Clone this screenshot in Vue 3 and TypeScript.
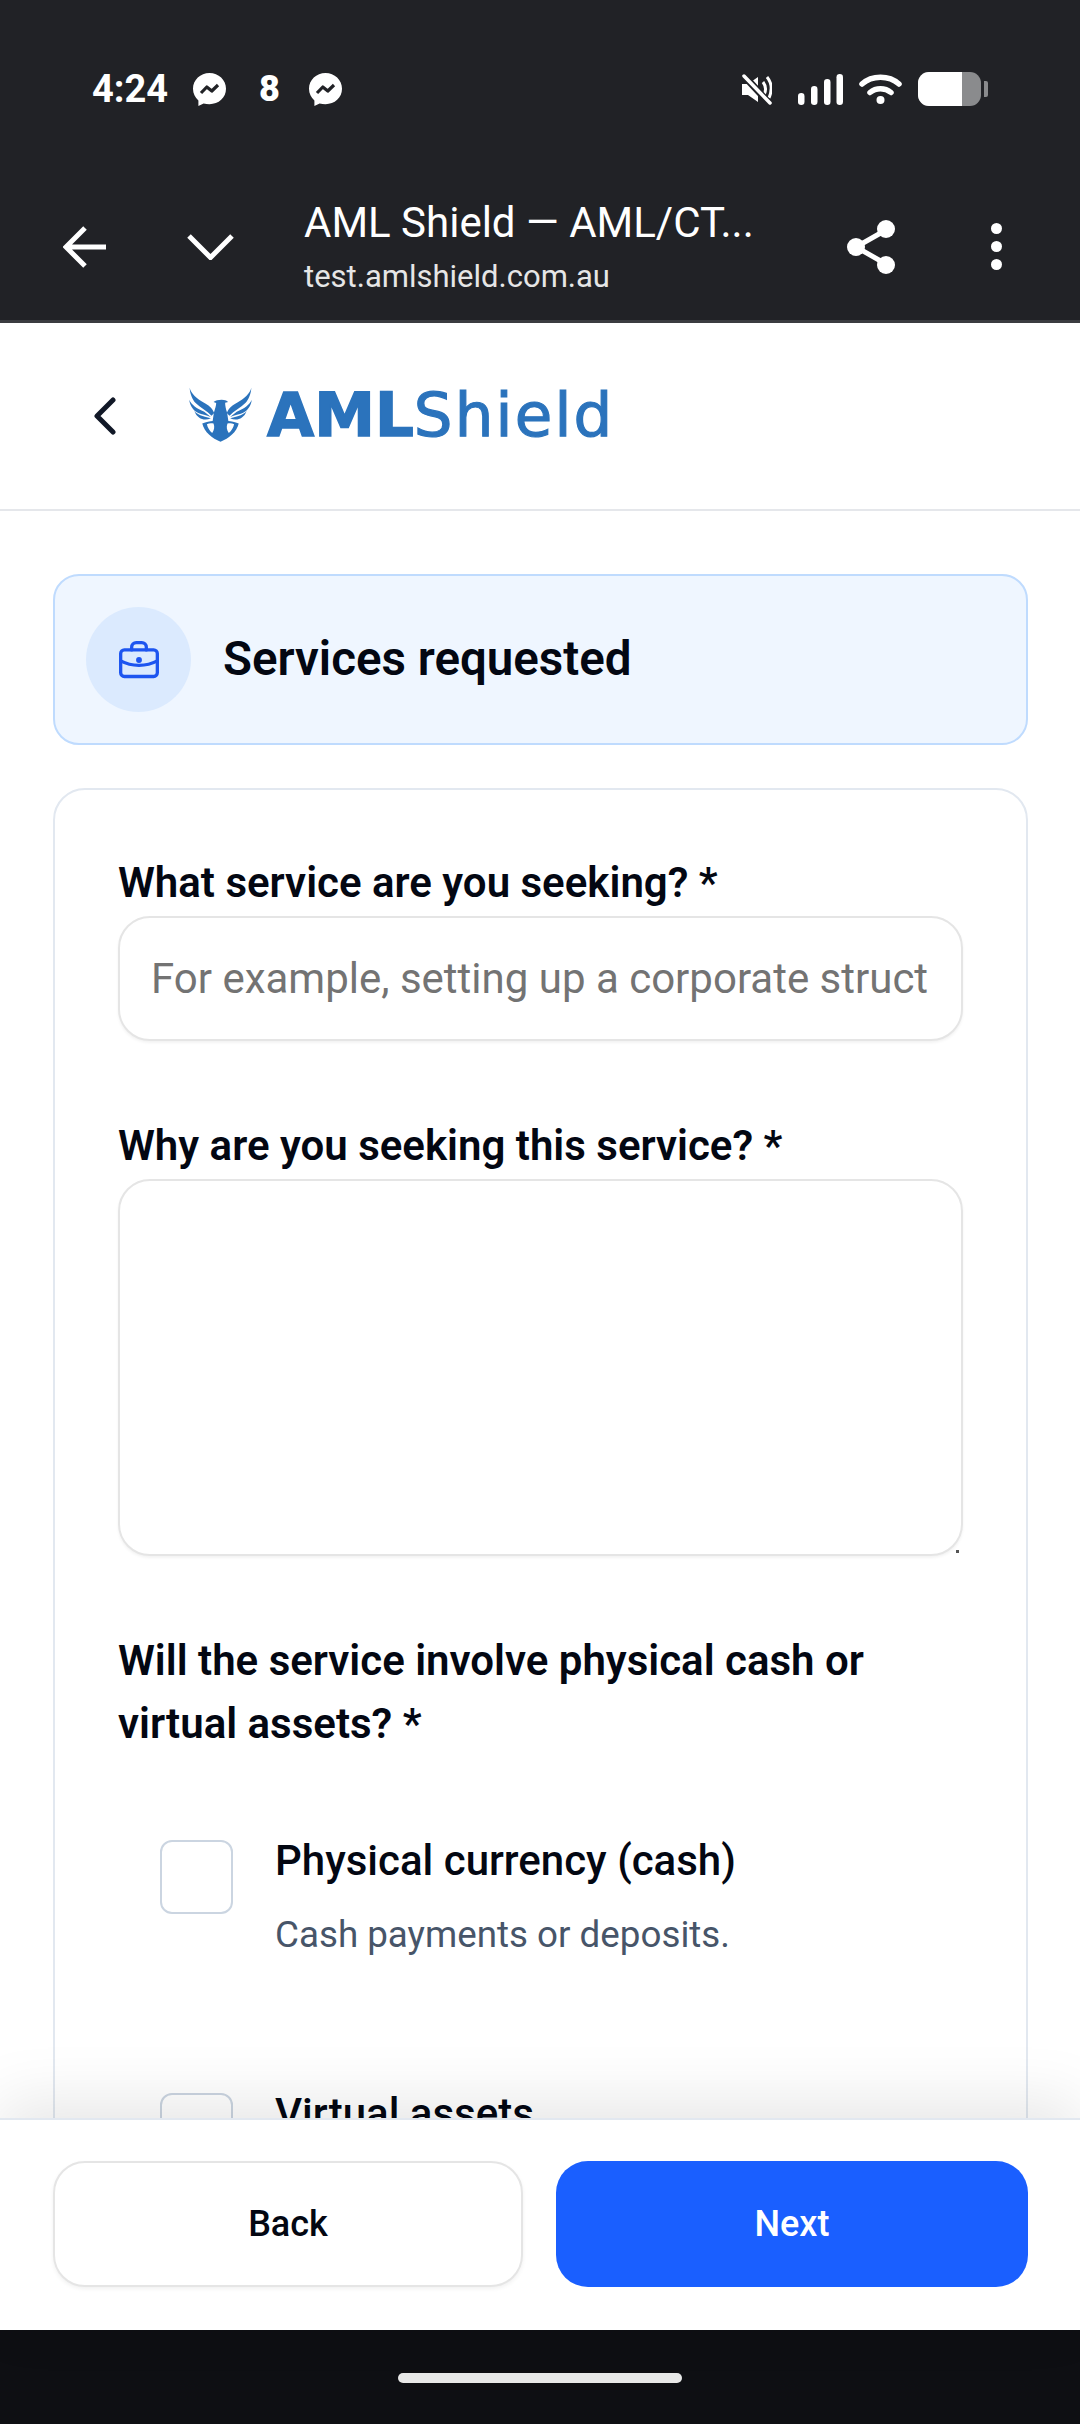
<script setup lang="ts">
interface AssetOption {
  title: string;
  hint?: string;
}

const options: AssetOption[] = [
  { title: "Physical currency (cash)", hint: "Cash payments or deposits." },
  { title: "Virtual assets" },
];
</script>

<template>
  <div class="phone">
    <!-- Android status bar -->
    <div class="status-bar">
      <span class="clock">4:24</span>
      <svg class="bubble" viewBox="0 0 33 33">
        <path fill="#fff" d="M16.500 0C7.400 0 0 6.900 0 15.800c0 4.800 2.100 8.800 5.400 11.600V33l5.200-2.600c1.800.5 3.800.8 5.900.8C25.600 31.200 33 24.700 33 15.800 33 6.900 25.600 0 16.500 0Z" />
        <path fill="none" stroke="#212226" stroke-width="3.200" stroke-linejoin="round" d="m8 20 5.800-6 5 4 6.200-6" />
      </svg>
      <span class="count">8</span>
      <svg class="bubble" viewBox="0 0 33 33">
        <path fill="#fff" d="M16.500 0C7.400 0 0 6.900 0 15.800c0 4.800 2.100 8.800 5.400 11.600V33l5.200-2.600c1.800.5 3.800.8 5.900.8C25.600 31.200 33 24.700 33 15.800 33 6.900 25.600 0 16.500 0Z" />
        <path fill="none" stroke="#212226" stroke-width="3.200" stroke-linejoin="round" d="m8 20 5.800-6 5 4 6.200-6" />
      </svg>
      <div class="status-right">
        <svg class="mute" viewBox="0 0 30 31">
          <path fill="#fff" d="M0 10h6l10-7v25l-10-7H0Z" />
          <path fill="none" stroke="#fff" stroke-width="3" d="M21 8c3 4 3 9 1 13M25 3c5 6 5 14 2 21" />
          <path stroke="#212226" stroke-width="7" d="M4 4l25 27" />
          <path stroke="#fff" stroke-width="3.500" stroke-linecap="round" d="M2 2l26 27" />
        </svg>
        <svg class="signal" viewBox="0 0 45 31">
          <rect x="0" y="19" width="6.500" height="12" rx="3.200" fill="#fff" />
          <rect x="13" y="12" width="6.500" height="19" rx="3.200" fill="#fff" />
          <rect x="26" y="5" width="6.500" height="26" rx="3.200" fill="#fff" />
          <rect x="38.500" y="0" width="6.500" height="31" rx="3.200" fill="#fff" />
        </svg>
        <svg class="wifi" viewBox="0 0 43 30">
          <path fill="none" stroke="#fff" stroke-width="5.500" stroke-linecap="round" d="M3 10C13 1 30 1 40 10M11 18.500c6-5 15-5 21 0" />
          <circle cx="21.500" cy="26" r="4" fill="#fff" />
        </svg>
        <div class="battery"><span class="battery-fill"></span></div>
        <span class="battery-nub"></span>
      </div>
    </div>

    <!-- Custom tab toolbar -->
    <div class="toolbar">
      <svg class="tb-back" viewBox="0 0 43 42" fill="none" stroke="#fff" stroke-width="5">
        <path d="M22 2 3 21l19 19M3 21h40" />
      </svg>
      <svg class="tb-chevron" viewBox="0 0 47 26" fill="none" stroke="#fff" stroke-width="5">
        <path d="m2 2 21.500 21.500L45 2" />
      </svg>
      <div class="tb-title">
        <div class="tb-name">AML Shield — AML/CT...</div>
        <div class="tb-url">test.amlshield.com.au</div>
      </div>
      <svg class="tb-share" viewBox="0 0 48 54" fill="none">
        <path stroke="#fff" stroke-width="5" d="M39 10 9 27l30 17" />
        <circle cx="39" cy="9" r="9" fill="#fff" />
        <circle cx="9" cy="27" r="9" fill="#fff" />
        <circle cx="39" cy="45" r="9" fill="#fff" />
      </svg>
      <div class="tb-dots"><span></span><span></span><span></span></div>
    </div>

    <!-- App header -->
    <header class="app-header">
      <svg class="app-back" viewBox="0 0 24 38" fill="none" stroke="#111827" stroke-width="5" stroke-linecap="round" stroke-linejoin="round">
        <path d="M20 3 4 19l16 16" />
      </svg>
      <svg class="eagle" viewBox="0 0 190 165" fill="#2b73bc">
        <g id="wing">
          <path d="M2 2C6 20 24 36 44 46c14 7 26 16 32 32l-8 8C54 72 34 62 20 48 10 38 3 20 2 2Z" />
          <path d="M1 38c5 14 23 28 45 36l20 16c-14-6-28-8-38-12C14 72 2 56 1 38Z" />
          <path d="M16 72c8 10 24 16 50 22-18 8-40 4-50-22Z" />
        </g>
        <use href="#wing" transform="matrix(-1 0 0 1 190 0)" />
        <path d="M74 45c8-7 26-9 38-5l6 5-9 2c0 9 2 18 6 30l4 27H71l4-27c4-12 7-21 7-29Z" />
        <path fill-rule="evenodd" d="M40 110c14-7 28-9 36-8h38c8-1 22 1 36 8-6 26-30 45-55 55-25-10-49-29-55-55ZM54 112c2 10 8 20 16 26 6-8 8-18 4-28-8-2-14-1-20 2Zm82 0c-6-3-12-4-20-2-4 10-2 20 4 28 8-6 14-16 16-26Z" />
      </svg>
      <span class="logo"><b>AML</b>Shield</span>
    </header>

    <main class="content">
      <section class="banner">
        <span class="banner-icon">
          <svg viewBox="0 0 24 24" fill="none" stroke="#1d55f0" stroke-width="1.800" stroke-linecap="round" stroke-linejoin="round">
            <rect x="2" y="6.500" width="20" height="14.500" rx="2" />
            <path d="M8 6.500V5a2.500 2.500 0 0 1 2.500-2.500h3A2.500 2.500 0 0 1 16 5v1.500" />
            <path d="M2 12.500c6 3.200 14 3.200 20 0" />
            <circle cx="12" cy="12" r=".7" fill="#1d55f0" />
          </svg>
        </span>
        <h1>Services requested</h1>
      </section>

      <form class="card" @submit.prevent>
        <label class="field-label">What service are you seeking? *</label>
        <input class="text-input" type="text" placeholder="For example, setting up a corporate structure" />

        <label class="field-label spaced">Why are you seeking this service? *</label>
        <div class="area-wrap">
          <textarea class="text-area"></textarea>
          <span class="resize-dot"></span>
        </div>

        <p class="field-label spaced">Will the service involve physical cash or virtual assets? *</p>
        <div class="options">
          <div v-for="option in options" :key="option.title" class="option">
            <span class="checkbox"></span>
            <div>
              <div class="option-title">{{ option.title }}</div>
              <div v-if="option.hint" class="option-hint">{{ option.hint }}</div>
            </div>
          </div>
        </div>
      </form>
    </main>

    <footer class="actions">
      <button class="btn btn-back" type="button">Back</button>
      <button class="btn btn-next" type="button">Next</button>
    </footer>

    <div class="nav-bar"><span class="home-pill"></span></div>
  </div>
</template>

<style scoped>
.phone {
  width: 1080px;
  height: 2424px;
  display: flex;
  flex-direction: column;
  overflow: hidden;
  background: #fff;
  font-family: Roboto, "Liberation Sans", sans-serif;
}

/* Status bar */
.status-bar {
  height: 106px;
  box-sizing: border-box;
  padding: 72px 92px 0;
  display: flex;
  align-items: center;
  background: #212226;
  color: #fff;
}

.clock {
  width: 77px;
  font-size: 38px;
  font-weight: 700;
  line-height: 34px;
}

.bubble {
  width: 33px;
  height: 33px;
  margin-left: 24px;
}

.count {
  margin-left: 33px;
  width: 18px;
  text-align: center;
  font-size: 36px;
  font-weight: 900;
  line-height: 34px;
}

.count + .bubble {
  margin-left: 32px;
}

.status-right {
  margin-left: auto;
  display: flex;
  align-items: center;
}

.mute {
  width: 30px;
  height: 31px;
}

.signal {
  width: 45px;
  height: 31px;
  margin-left: 26px;
}

.wifi {
  width: 43px;
  height: 30px;
  margin-left: 16px;
}

.battery {
  width: 63px;
  height: 34px;
  margin-left: 16px;
  border-radius: 11px;
  background: #8a8b8d;
  overflow: hidden;
}

.battery-fill {
  display: block;
  width: 44px;
  height: 100%;
  background: #fff;
}

.battery-nub {
  width: 4px;
  height: 16px;
  margin-left: 3px;
  border-radius: 0 2px 2px 0;
  background: #8a8b8d;
}

/* Toolbar */
.toolbar {
  height: 217px;
  box-sizing: border-box;
  padding: 84px 0 17px 63px;
  display: flex;
  align-items: center;
  background: #212226;
  border-bottom: 3px solid #3b3c40;
  color: #fff;
}

.tb-back {
  width: 43px;
  height: 42px;
}

.tb-chevron {
  width: 47px;
  height: 26px;
  margin-left: 81px;
}

.tb-title {
  margin-left: 70px;
  width: 543px;
}

.tb-name {
  font-size: 42px;
  line-height: 54px;
}

.tb-url {
  margin-top: 6px;
  font-size: 31px;
  line-height: 42px;
  color: #e6e6e6;
}

.tb-share {
  width: 48px;
  height: 54px;
}

.tb-dots {
  margin-left: 96px;
  display: flex;
  flex-direction: column;
  gap: 7px;
}

.tb-dots span {
  width: 11px;
  height: 11px;
  border-radius: 50%;
  background: #fff;
}

/* App header */
.app-header {
  height: 188px;
  flex: none;
  box-sizing: border-box;
  padding: 0 0 4px 93px;
  display: flex;
  align-items: center;
  border-bottom: 2px solid #e5e7eb;
}

.app-back {
  width: 24px;
  height: 38px;
  margin-top: 4px;
}

.eagle {
  width: 63px;
  height: 55px;
  margin-left: 72px;
  margin-top: 1px;
}

.logo {
  margin-left: 15px;
  font-family: "DejaVu Sans", Inter, sans-serif;
  font-size: 61px;
  letter-spacing: 2.200px;
  -webkit-text-stroke: 1.2px #2b73bc;
  color: #2b73bc;
}

.logo b {
  font-weight: 700;
  letter-spacing: 0;
  -webkit-text-stroke: 1.5px #2b73bc;
}

/* Scrolled content */
.content {
  flex: 1;
  min-height: 0;
  overflow: hidden;
  padding: 63px 52px 0 53px;
}

.banner {
  height: 171px;
  box-sizing: border-box;
  padding-left: 31px;
  display: flex;
  align-items: center;
  gap: 32px;
  background: #eff6ff;
  border: 2px solid #bfdbfe;
  border-radius: 26px;
}

.banner-icon {
  width: 105px;
  height: 105px;
  border-radius: 50%;
  background: #dbeafe;
  display: flex;
  align-items: center;
  justify-content: center;
}

.banner-icon svg {
  width: 44px;
  height: 44px;
}

.banner h1 {
  margin: -2px 0 0;
  font-size: 47.500px;
  font-weight: 600;
  color: #030712;
}

.card {
  margin-top: 43px;
  box-sizing: border-box;
  padding: 61px 63px 0;
  height: 1400px;
  background: #fff;
  border: 2px solid #e2e8f0;
  border-radius: 32px;
}

.field-label {
  display: block;
  margin: 0 0 2px;
  font-size: 42px;
  font-weight: 600;
  line-height: 63px;
  color: #030712;
}

.field-label.spaced {
  margin-top: 73px;
}

.text-input,
.text-area {
  display: block;
  width: 100%;
  box-sizing: border-box;
  background: #fff;
  border: 2px solid #e5e5e5;
  border-radius: 32px;
  box-shadow: 0 2px 3px rgba(0, 0, 0, 0.05);
  font-family: inherit;
  outline: none;
}

.text-input {
  height: 125px;
  padding: 0 31px;
  font-size: 42px;
}

.text-input::placeholder {
  color: #737373;
}

.area-wrap {
  position: relative;
}

.text-area {
  height: 377px;
  resize: none;
}

.resize-dot {
  position: absolute;
  right: 4px;
  bottom: 3px;
  width: 3px;
  height: 3px;
  background: #555;
}

.options {
  margin-top: 85px;
  padding-left: 42px;
  display: flex;
  flex-direction: column;
  gap: 134px;
}

.option {
  display: flex;
  gap: 42px;
}

.checkbox {
  width: 73px;
  height: 74px;
  flex: none;
  box-sizing: border-box;
  background: #fff;
  border: 2px solid #cbd5e1;
  border-radius: 12px;
}

.option-title {
  font-size: 42px;
  font-weight: 500;
  line-height: 50px;
  color: #030712;
  margin-top: -4px;
}

.option-hint {
  margin-top: 25px;
  font-size: 36.750px;
  line-height: 48px;
  color: #475569;
}

/* Sticky footer */
.actions {
  position: relative;
  flex: none;
  height: 212px;
  box-sizing: border-box;
  padding: 41px 52px 43px 53px;
  display: grid;
  grid-template-columns: 470px 1fr;
  gap: 33px;
  background: #fff;
  border-top: 2px solid #e2e8f0;
  box-shadow: 0 -15px 60px rgba(0, 0, 0, 0.1);
}

.btn {
  border-radius: 32px;
  font-family: inherit;
  font-size: 36px;
  font-weight: 500;
}

.btn-back {
  background: #fff;
  border: 2px solid #e5e5e5;
  box-shadow: 0 2px 4px rgba(0, 0, 0, 0.06);
  color: #030712;
}

.btn-next {
  background: #1a5fff;
  border: none;
  color: #fff;
}

.nav-bar {
  flex: none;
  height: 94px;
  background: #0e0f13;
  display: flex;
  justify-content: center;
  padding-top: 43px;
  box-sizing: border-box;
}

.home-pill {
  width: 284px;
  height: 10px;
  border-radius: 5px;
  background: #e8e8e8;
}
</style>
